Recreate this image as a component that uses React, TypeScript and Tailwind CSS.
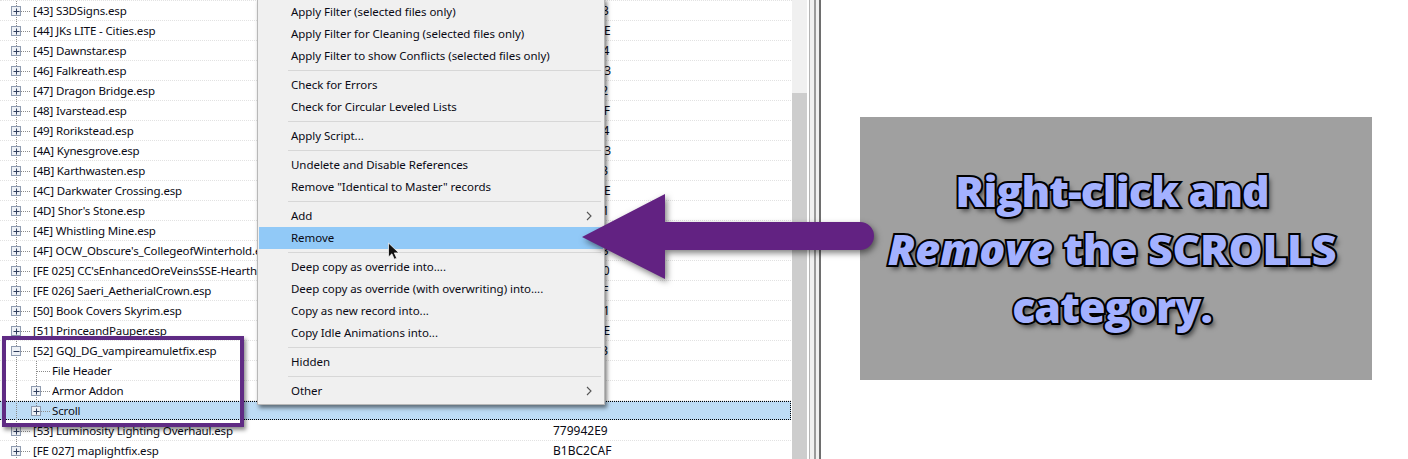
const UI_FONT = "font-['Noto_Sans','Open_Sans',sans-serif]"

type Row = { label: string; value?: string; level?: number; kind?: 'plus' | 'minus' | 'leaf'; selected?: boolean }

const ROWS: Row[] = [
  { label: '[43] S3DSigns.esp', value: 'A1C0F233' },
  { label: '[44] JKs LITE - Cities.esp', value: '5D02B17E' },
  { label: '[45] Dawnstar.esp', value: 'C47A9E14' },
  { label: '[46] Falkreath.esp', value: '0E6B3DA3' },
  { label: '[47] Dragon Bridge.esp', value: '92F4C602' },
  { label: '[48] Ivarstead.esp', value: '38D17A5F' },
  { label: '[49] Rorikstead.esp', value: 'E05B2C94' },
  { label: '[4A] Kynesgrove.esp', value: '7AC61D03' },
  { label: '[4B] Karthwasten.esp', value: '16F9E8B3' },
  { label: '[4C] Darkwater Crossing.esp', value: 'B3027D4E' },
  { label: "[4D] Shor's Stone.esp", value: '4E8AC051' },
  { label: '[4E] Whistling Mine.esp', value: 'D9156B2F' },
  { label: "[4F] OCW_Obscure's_CollegeofWinterhold.esp", value: '6C3FA783' },
  { label: "[FE 025] CC'sEnhancedOreVeinsSSE-Hearthfire.esp", value: '20E7D490' },
  { label: '[FE 026] Saeri_AetherialCrown.esp', value: 'F18B06CF' },
  { label: '[50] Book Covers Skyrim.esp', value: '85D24131' },
  { label: '[51] PrinceandPauper.esp', value: '9A47C0BE' },
  { label: '[52] GQJ_DG_vampireamuletfix.esp', value: '3B6E1F23', kind: 'minus' },
  { label: 'File Header', level: 1, kind: 'leaf' },
  { label: 'Armor Addon', level: 1 },
  { label: 'Scroll', level: 1, selected: true },
  { label: '[53] Luminosity Lighting Overhaul.esp', value: '779942E9' },
  { label: '[FE 027] maplightfix.esp', value: 'B1BC2CAF' },
]

type MenuEntry = { label: string; arrow?: boolean; active?: boolean } | 'sep'

const MENU: MenuEntry[] = [
  { label: 'Apply Filter (selected files only)' },
  { label: 'Apply Filter for Cleaning (selected files only)' },
  { label: 'Apply Filter to show Conflicts (selected files only)' },
  'sep',
  { label: 'Check for Errors' },
  { label: 'Check for Circular Leveled Lists' },
  'sep',
  { label: 'Apply Script...' },
  'sep',
  { label: 'Undelete and Disable References' },
  { label: 'Remove "Identical to Master" records' },
  'sep',
  { label: 'Add', arrow: true },
  { label: 'Remove', active: true },
  'sep',
  { label: 'Deep copy as override into....' },
  { label: 'Deep copy as override (with overwriting) into....' },
  { label: 'Copy as new record into...' },
  { label: 'Copy Idle Animations into...' },
  'sep',
  { label: 'Hidden' },
  'sep',
  { label: 'Other', arrow: true },
]

function Expander({ x, minus }: { x: number; minus?: boolean }) {
  return (
    <g>
      <rect x={x - 4.5} y={5.5} width={9} height={9} fill="#eef1f6" stroke="#8e9bb0" />
      <path d={`M${x - 2.5} 10.5h6`} stroke="#2f3d5c" />
      {!minus && <path d={`M${x + 0.5} 7.5v6`} stroke="#2f3d5c" />}
    </g>
  )
}

function TreeGlyph({ row, last }: { row: Row; last: boolean }) {
  const dots = { stroke: '#8a8a8a', strokeDasharray: '1 1' }
  if (row.level === 1) {
    return (
      <svg width="52" height="20" className="shrink-0">
        <path d="M16.5 0v20" {...dots} />
        <path d={last ? 'M36.5 0v10' : 'M36.5 0v20'} {...dots} />
        <path d="M37 10.5h13" {...dots} />
        {row.kind !== 'leaf' && <Expander x={36} />}
      </svg>
    )
  }
  return (
    <svg width="33" height="20" className="shrink-0">
      <path d="M16.5 0v20" {...dots} />
      <path d="M21 10.5h10" {...dots} />
      <Expander x={16} minus={row.kind === 'minus'} />
    </svg>
  )
}

function Chevron() {
  return (
    <svg width="6" height="10" viewBox="0 0 6 10" className="absolute right-[11px] top-[6px]">
      <path d="M1 1l4 4-4 4" fill="none" stroke="#555" strokeWidth="1.1" />
    </svg>
  )
}

export default function App() {
  return (
    <div className={`relative flex h-[459px] w-[1408px] overflow-hidden bg-white text-[11.5px] text-[#0a0a14] ${UI_FONT}`}>
      {/* Tree list */}
      <div className="w-[792px] shrink-0 border-t border-dotted border-[#e2e2e2] pr-[1px]">
        {ROWS.map((row, i) => (
          <div
            key={row.label}
            className={
              row.selected
                ? 'mb-[1px] flex h-[19px] items-center border border-dotted border-black bg-[#bddcf5] -ml-[1px]'
                : 'flex h-[20px] items-center border-b border-dotted border-[#e2e2e2]'
            }
          >
            <TreeGlyph row={row} last={i === 20} />
            <span className="w-[520px] shrink-0 truncate leading-[19px] tracking-[-0.15px]">{row.label}</span>
            {row.value && <span className="text-[12px] leading-[19px]">{row.value}</span>}
          </div>
        ))}
      </div>

      {/* Scrollbar */}
      <div className="flex w-[15px] shrink-0 flex-col bg-[#f0f0f0] pt-[93px]">
        <div className="flex-1 bg-[#cdcdcd]" />
      </div>

      {/* Splitter */}
      <div className="flex w-[14px] shrink-0">
        <div className="w-[2px] bg-white" />
        <div className="w-[1px] bg-[#b4b4b4]" />
        <div className="w-[4px] bg-[#f0f0f0]" />
        <div className="w-[2px] bg-[#9a9a9a]" />
        <div className="w-[3px] bg-[#f0f0f0]" />
        <div className="w-[2px] bg-[#6e6e6e]" />
      </div>

      {/* Right panel */}
      <div className="flex-1 bg-white pl-[39px] pt-[117px]">
        <div className="flex h-[263px] w-[512px] flex-col items-center justify-center bg-[#a0a0a0] pr-[8px] font-['Open_Sans',sans-serif] text-[43px] leading-[58px] font-extrabold tracking-[-1px] text-[#a3b1ff] [-webkit-text-stroke:4px_#000] [paint-order:stroke_fill] [text-shadow:3px_4px_5px_rgba(0,0,0,0.55)]">
          <div>Right-click and</div>
          <div className="tracking-[-0.4px]">
            <i>Remove</i> the SCROLLS
          </div>
          <div>category.</div>
        </div>
      </div>

      {/* Context menu */}
      <div className="absolute left-[257px] top-[-2px] w-[348px] border border-[#b8b8b8] bg-[#f0f0f0] px-[1px] py-[2px] tracking-[-0.04px] shadow-[2px_3px_4px_rgba(0,0,0,0.5)]">
        {MENU.map((entry, i) =>
          entry === 'sep' ? (
            <div key={i} className="flex h-[7px] items-center pl-[29px] pr-[2px]">
              <div className="h-[1px] w-full bg-[#d7d7d7]" />
            </div>
          ) : (
            <div
              key={i}
              className={`relative flex h-[22px] items-center pl-[32px] leading-[22px] ${entry.active ? 'bg-[#91c9f7]' : ''}`}
            >
              {entry.label}
              {entry.arrow && <Chevron />}
            </div>
          ),
        )}
      </div>

      {/* Mouse pointer */}
      <svg width="13" height="19" viewBox="0 0 13 19" className="absolute left-[387px] top-[242px]">
        <path d="M1.5 1v14l3.4-3.2 2.4 5.4 2.4-1-2.4-5.3h4.6z" fill="#111" stroke="#fff" strokeWidth="0.7" />
      </svg>

      {/* Highlight box round the plugin */}
      <div className="absolute left-[2px] top-[336px] h-[91px] w-[242px] border-4 border-[#5f2b84] shadow-[2px_3px_4px_rgba(0,0,0,0.45)]" />

      {/* Arrow */}
      <svg width="310" height="105" viewBox="0 0 310 105" className="absolute left-[575px] top-[188px] drop-shadow-[2px_3px_3px_rgba(0,0,0,0.5)]">
        <path d="M7 49 90 6v28h195a14 14 0 0 1 0 28H90v29z" fill="#622282" />
      </svg>
    </div>
  )
}
